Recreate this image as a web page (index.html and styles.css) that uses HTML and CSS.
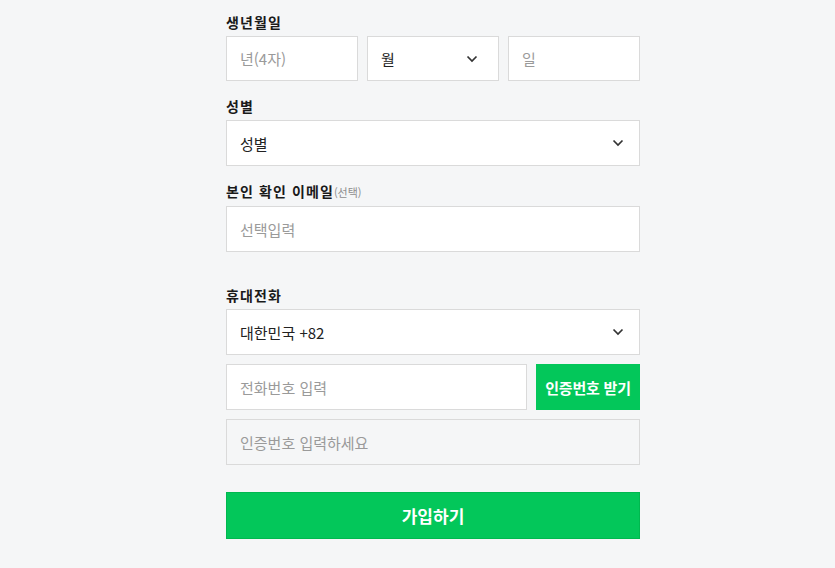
FILE: index.html
```html
<!DOCTYPE html>
<html lang="ko">
<head>
<meta charset="utf-8">
<link rel="stylesheet" href="styles.css">
</head>
<body>
<div class="page">
  <form class="form">
    <div class="field">
      <div class="label">생년월일</div>
      <div class="birth-row">
        <div class="box short"><span class="ph">년(4자)</span></div>
        <div class="box short select month"><span class="val">월</span>
          <svg class="chev" width="12" height="8" viewBox="0 0 12 8"><polyline points="1.5,1.5 6,6 10.5,1.5" fill="none" stroke="#333" stroke-width="1.7"/></svg>
        </div>
        <div class="box short"><span class="ph">일</span></div>
      </div>
    </div>

    <div class="field">
      <div class="label">성별</div>
      <div class="box select"><span class="val">성별</span>
        <svg class="chev" width="12" height="8" viewBox="0 0 12 8"><polyline points="1.5,1.5 6,6 10.5,1.5" fill="none" stroke="#333" stroke-width="1.7"/></svg>
      </div>
    </div>

    <div class="field">
      <div class="label">본인 확인 이메일<span class="opt">(선택)</span></div>
      <div class="box"><span class="ph">선택입력</span></div>
    </div>

    <div class="field phone">
      <div class="label">휴대전화</div>
      <div class="box select"><span class="val">대한민국 +82</span>
        <svg class="chev" width="12" height="8" viewBox="0 0 12 8"><polyline points="1.5,1.5 6,6 10.5,1.5" fill="none" stroke="#333" stroke-width="1.7"/></svg>
      </div>
      <div class="phone-row">
        <div class="box grow"><span class="ph">전화번호 입력</span></div>
        <button type="button" class="send">인증번호 받기</button>
      </div>
      <div class="box verify"><span class="ph">인증번호 입력하세요</span></div>
    </div>

    <button type="button" class="join">가입하기</button>
  </form>
</div>
</body>
</html>
```

FILE: styles.css
```css
html, body {
  margin: 0;
  padding: 0;
  background: #f5f6f7;
}

body {
  font-family: "Noto Sans CJK KR", "Noto Sans", sans-serif;
  color: #222;
}

.page {
  padding: 12px 0 0 226px;
}

.form {
  width: 414px;
  margin: 0;
}

.field + .field {
  margin-top: 15px;
}

.field.phone {
  margin-top: 33px;
}

.label {
  font-size: 14px;
  line-height: 20px;
  font-weight: 700;
  color: #1a1a1a;
  margin-bottom: 4px;
  letter-spacing: 1.1px;
}

.opt {
  font-size: 11px;
  font-weight: 400;
  color: #8e8e8e;
  letter-spacing: 0;
  margin-left: 0;
}

.box {
  box-sizing: border-box;
  height: 46px;
  border: 1px solid #dadada;
  background: #fff;
  padding: 0 14px 0 13px;
  display: flex;
  align-items: center;
  font-size: 15px;
}

.box.short {
  height: 45px;
}

.ph {
  color: #9a9a9a;
}

.val {
  color: #222;
}

.select {
  justify-content: space-between;
  padding-right: 15px;
}

.select.month {
  padding-right: 20px;
}

.chev {
  display: block;
}

.birth-row {
  display: grid;
  grid-template-columns: repeat(3, 1fr);
  gap: 9px;
}

.phone-row {
  display: flex;
  gap: 9px;
  margin-top: 9px;
}

.grow {
  flex: 1;
}

.send {
  width: 104px;
  height: 46px;
  box-sizing: border-box;
  border: 1px solid #03c75a;
  background: #03c75a;
  color: #fff;
  font-family: inherit;
  font-size: 15px;
  font-weight: 700;
  letter-spacing: -0.2px;
  padding: 0;
  white-space: nowrap;
}

.verify {
  margin-top: 9px;
  background: #f5f6f7;
}

.join {
  display: block;
  width: 100%;
  height: 47px;
  margin-top: 27px;
  box-sizing: border-box;
  border: 1px solid #00b84f;
  background: #03c75a;
  color: #fff;
  font-family: inherit;
  font-size: 17px;
  font-weight: 700;
  padding: 0;
}
```
